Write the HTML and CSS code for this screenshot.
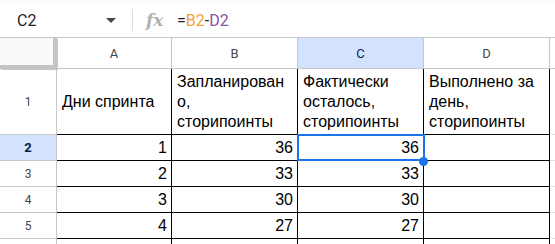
FILE: index.html
```html
<!DOCTYPE html>
<html lang="ru">
<head>
    <meta charset="UTF-8">
    <title>Спринт</title>
    <link rel="stylesheet" href="styles.css">
</head>
<body>

<div class="top-strip"></div>

<div class="formula-bar">
    <div class="name-box">
        <span class="name-box-ref">C2</span>
        <span class="name-box-arrow"></span>
    </div>
    <div class="formula-divider"></div>
    <div class="fx">fx</div>
    <div class="formula">=<span class="ref-b">B2</span>-<span class="ref-d">D2</span></div>
</div>

<div class="sheet">
    <div class="corner"></div>
    <div class="col-head">A</div>
    <div class="col-head">B</div>
    <div class="col-head active">C</div>
    <div class="col-head">D</div>
    <div class="col-head blank"></div>

    <div class="row-head">1</div>
    <div class="cell text">Дни спринта</div>
    <div class="cell text">Запланирован<br>о,<br>сторипоинты</div>
    <div class="cell text">Фактически осталось, сторипоинты</div>
    <div class="cell text">Выполнено за день, сторипоинты</div>
    <div class="cell blank"></div>

    <div class="row-head active">2</div>
    <div class="cell num">1</div>
    <div class="cell num">36</div>
    <div class="cell num selected">36<span class="fill-handle"></span></div>
    <div class="cell"></div>
    <div class="cell blank"></div>

    <div class="row-head">3</div>
    <div class="cell num">2</div>
    <div class="cell num">33</div>
    <div class="cell num">33</div>
    <div class="cell"></div>
    <div class="cell blank"></div>

    <div class="row-head">4</div>
    <div class="cell num">3</div>
    <div class="cell num">30</div>
    <div class="cell num">30</div>
    <div class="cell"></div>
    <div class="cell blank"></div>

    <div class="row-head">5</div>
    <div class="cell num">4</div>
    <div class="cell num">27</div>
    <div class="cell num">27</div>
    <div class="cell"></div>
    <div class="cell blank"></div>

    <!-- next row, only its top edge is in view -->
    <div class="row-head"></div>
    <div class="cell"></div>
    <div class="cell"></div>
    <div class="cell"></div>
    <div class="cell"></div>
    <div class="cell blank"></div>
</div>

</body>
</html>
```

FILE: styles.css
```css
html, body {
    margin: 0;
    padding: 0;
    background: #fff;
    overflow: hidden;
}

body {
    font-family: Roboto, 'Liberation Sans', sans-serif;
    color: #1f1f1f;
}

.top-strip {
    height: 3px;
    background-color: #f9fbfd;
}

/* formula bar */

.formula-bar {
    height: 34px;
    display: flex;
    align-items: center;
    border-bottom: 1px solid #c7c7c7;
}

.name-box {
    width: 120px;
    display: flex;
    align-items: center;
    justify-content: space-between;
    padding-left: 17px;
    box-sizing: border-box;
    padding-right: 4px;
}

.name-box-ref {
    font-size: 16px;
}

.name-box-arrow {
    width: 0;
    height: 0;
    border-left: 5px solid transparent;
    border-right: 5px solid transparent;
    border-top: 5px solid #444746;
}

.formula-divider {
    width: 1px;
    height: 22px;
    margin-left: 12px;
    background-color: #dadce0;
}

.fx {
    margin-left: 13px;
    width: 18px;
    font-family: 'DejaVu Serif', serif;
    font-style: italic;
    font-weight: bold;
    font-size: 17px;
    color: #b1b1b1;
}

.formula {
    margin-left: 13px;
    font-size: 16px;
    color: #1f1f1f;
}

.ref-b {
    color: #f4a23c;
}

.ref-d {
    color: #8e4fa5;
}

/* grid */

.sheet {
    display: grid;
    grid-template-columns: 57px 115px 126px 126px 126px 1fr;
    grid-template-rows: 31px 66px 26px 26px 26px 26px 26px;
}

.corner {
    background-color: #f8f9fa;
    border-right: 4px solid #c4c4c4;
    border-bottom: 4px solid #c4c4c4;
    box-shadow: 1px 1px 0 #c7c7c7;
}

.col-head {
    display: flex;
    align-items: center;
    justify-content: center;
    font-size: 13px;
    color: #444746;
    border-right: 1px solid #c7c7c7;
    border-bottom: 1px solid #c7c7c7;
}

.col-head.active {
    background-color: #d3e3fd;
    color: #041e49;
}

.row-head {
    display: flex;
    align-items: center;
    justify-content: center;
    font-size: 12px;
    color: #444746;
    border-right: 1px solid #c7c7c7;
    border-bottom: 1px solid #c7c7c7;
}

.row-head.active {
    background-color: #d3e3fd;
    color: #041e49;
    font-weight: bold;
    font-size: 13px;
}

.cell {
    position: relative;
    display: flex;
    align-items: center;
    padding: 0 4px 0 5px;
    font-family: 'Liberation Sans', Arial, sans-serif;
    font-size: 16px;
    line-height: 20px;
    color: #000;
    border-right: 1px solid #000;
    border-bottom: 1px solid #000;
    box-sizing: border-box;
}

.cell.num {
    justify-content: flex-end;
}

.cell.blank {
    border-right: none;
    border-bottom: 1px solid #e2e2e2;
}

.cell.selected::after {
    content: "";
    position: absolute;
    left: -1px;
    top: -1px;
    right: -2px;
    bottom: -1px;
    border: 2px solid #1a73e8;
}

.fill-handle {
    position: absolute;
    right: -5px;
    bottom: -6px;
    width: 9px;
    height: 9px;
    border-radius: 50%;
    background-color: #1a73e8;
    z-index: 1;
}
```
